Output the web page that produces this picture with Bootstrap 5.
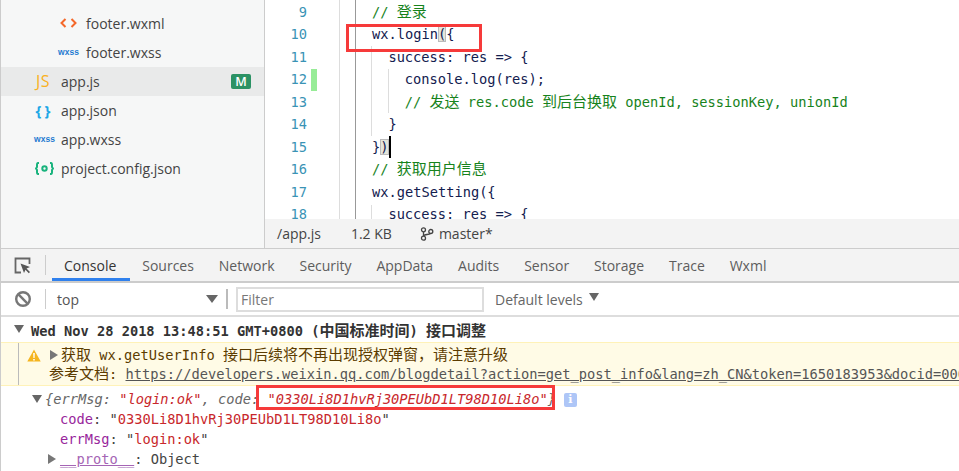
<!DOCTYPE html>
<html lang="zh-CN">
<head>
<meta charset="utf-8">
<title>WeChat DevTools</title>
<link href="https://cdn.jsdelivr.net/npm/bootstrap@5.3.0/dist/css/bootstrap.min.css" rel="stylesheet">
<style>
html,body{margin:0;height:471px;overflow:hidden;background:#fff}
.app-root{width:959px;height:471px;position:relative;overflow:hidden;border-left:1px solid #ccc;
 font-family:"Open Sans","Noto Sans CJK SC",sans-serif;font-size:14px;color:#3a3a3a}
.mono,.mono *{font-family:"DejaVu Sans Mono","Noto Sans CJK SC",monospace;font-size:13.7px}
.mono .cjk{font-family:"Noto Sans CJK SC",sans-serif;font-size:15px;line-height:1}
.top-pane{height:249px;border-bottom:1px solid #ccc}
.side-pane{width:264px;background:#f6f7f7;border-right:1px solid #ccc;flex:none;padding-top:8.5px}
.file-row{height:29px;line-height:29px;padding-right:13px;color:#444;font-size:14px}
.file-row.nested{padding-left:57px}
.file-row.flat{padding-left:33px}
.file-row.active{background:#e9eaea}
.ficon{width:21px;margin-right:7px;flex:none;display:flex;align-items:center;justify-content:center;height:29px}
.file-row.flat .ficon{margin-right:6px}
.wxss{font:bold 8.5px "Liberation Sans",sans-serif;color:#1f7ad1;letter-spacing:0}
.file-row.flat .jsicon{color:#f9b122;font:16px "Open Sans",sans-serif;letter-spacing:.5px;justify-content:flex-start;width:22px;margin-right:5px;padding-left:2px}
.jsonicon{color:#1ea7e6;font:bold 15px "Open Sans",sans-serif;letter-spacing:3px}
.m-badge{background:#2b9264;color:#fff;font-size:12.5px;font-weight:600;line-height:15px;height:15px;width:20px;text-align:center;border-radius:2px}
.main-pane{flex:1;min-width:0}
.code-view{height:219px;overflow:hidden}
.gutter{width:42px;flex:none;text-align:right;color:#3a93b5;padding-top:1px}
.code-line,.gutter-num{height:22.44px;line-height:22.44px;white-space:pre}
.change-col{width:32px;flex:none;padding:69px 0 0 4px}
.change-mark{width:6px;height:22px;background:#97ec97}
.code-col{flex:1;min-width:0;position:relative;border-left:1px solid #ddd;padding-left:15px}
.code-in{border-left:1px solid #999;padding-left:16px;padding-top:1px;height:240px;position:relative}
.c-id{color:#13204f}.c-cm{color:#17831c}
.guide{position:absolute;width:1px;background:#ddd}
.g1{left:15px;top:46px;height:90px}.g2{left:32px;top:69px;height:44px}.g3{left:15px;top:205px;height:30px}
.ind1{padding-left:16.4px}.ind2{padding-left:32.8px}
.br-hi{background:#e5e5da;box-shadow:inset 0 0 0 1px #bbb}
.cursor-mark{display:inline-block;width:2px;height:22px;background:#000;vertical-align:top}
.status-bar{height:29px;background:#f3f3f3;line-height:29px;padding-left:12px;font-size:14px;color:#444;gap:30px}
.branch-item{gap:5px;margin-left:-2px}
.dev-tabs{height:34px;background:#f3f3f3;border-bottom:2px solid #ccc}
.tool-ico{width:51px;flex:none;position:relative}
.vsep{width:1px;background:#ccc;height:20px;flex:none}
.dev-tab{padding:0 13px;color:#5d5d5d;height:32px;line-height:33px;font-size:14px;flex:none;margin-right:-1.100px}
.dev-tab.on{color:#333;box-shadow:inset 0 -3px 0 #2f80ed;padding:0 14px 0 12px}
.filter-bar{height:34px;border-bottom:2px solid #ddd}
.ctx-box{width:174px;padding-left:11px;color:#555;flex:none}
.tri-d{width:0;height:0;border-left:5px solid transparent;border-right:5px solid transparent;border-top:8px solid #666;flex:none}
.tri-wide{border-left-width:6px;border-right-width:6px;margin-right:2px}
.tri-r{width:0;height:0;border-top:5px solid transparent;border-bottom:5px solid transparent;border-left:8px solid #777;flex:none;display:inline-block}
.sep-thick{width:2px;background:#bbb;margin-left:6px}
.filter-input{width:248px;height:25px;border:2px solid #ddd;margin-left:8px;padding-left:3px;line-height:21px;color:#777;flex:none}
.levels{color:#666;margin-left:11px;gap:6px}
.group-head{height:25px;line-height:28px;padding-left:13px;font-weight:bold;color:#333;white-space:nowrap}
.warn-row{height:44px;background:#fffbe6;border-top:1px solid #fff2b8;border-bottom:1px solid #fff2b8;color:#5c3c00;line-height:19px;white-space:nowrap;overflow:hidden;position:relative;padding-left:49px;padding-top:3px}
.warn-bar{position:absolute;left:17px;top:0;bottom:0;width:1px;background:#bbb}
.warn-ico{position:absolute;left:26px;top:6px}
.warn-second{margin-left:-1px}
.warn-row a{color:#555}
.obj-area{position:relative;white-space:nowrap;padding-top:3px}
.obj-line{height:20px;line-height:20px}
.obj-line.l0{padding-left:31px}.obj-line.l1{padding-left:59px}
.key-i{color:#666;font-style:italic}.str-i{color:#c8272b;font-style:italic}
.key-p{color:#98269c}.str-r{color:#c8272b}.plain{color:#444}
.proto-key{color:#a565b5;text-decoration:underline}
.info-chip{display:inline-block;width:13px;height:14px;background:#aec6f7;color:#fff;border-radius:2px;font:bold 11px/14px "DejaVu Serif",serif;text-align:center;vertical-align:1px;margin-left:8px}
.red-box{position:absolute;border:3px solid #f63a3a;pointer-events:none}
.rb1{left:345px;top:24px;width:136px;height:28px}
.rb2{left:255px;top:385px;width:299px;height:25px}
</style>
</head>
<body>
<div class="app-root">
  <div class="top-pane d-flex">
    <div class="side-pane">
      <div class="file-row nested d-flex">
        <span class="ficon"><svg width="17" height="10" viewBox="0 0 17 10" fill="none" stroke="#f4682a" stroke-width="2"><path d="M5.500 1 1.500 5l4 4M11.500 1l4 4-4 4"/></svg></span>footer.wxml</div>
      <div class="file-row nested d-flex"><span class="ficon wxss">wxss</span>footer.wxss</div>
      <div class="file-row flat d-flex active"><span class="ficon jsicon">JS</span><span class="flex-grow-1">app.js</span><span class="m-badge align-self-center">M</span></div>
      <div class="file-row flat d-flex"><span class="ficon jsonicon">{}</span>app.json</div>
      <div class="file-row flat d-flex"><span class="ficon wxss">wxss</span>app.wxss</div>
      <div class="file-row flat d-flex"><span class="ficon"><svg width="19" height="13" viewBox="0 0 19 13" fill="none" stroke="#19b37d" stroke-width="2"><path d="M4 1H3C2 1 2 2 2 3v2L1 6.500l1 1.500v2c0 1 0 2 1 2h1M15 1h1c1 0 1 1 1 2v2l1 1.500-1 1.500v2c0 1 0 2-1 2h-1"/><circle cx="9.500" cy="6.500" r="2.200"/></svg></span>project.config.json</div>
    </div>
    <div class="main-pane d-flex flex-column">
      <div class="code-view d-flex mono">
        <div class="gutter">
          <div class="gutter-num">9</div><div class="gutter-num">10</div><div class="gutter-num">11</div><div class="gutter-num">12</div><div class="gutter-num">13</div><div class="gutter-num">14</div><div class="gutter-num">15</div><div class="gutter-num">16</div><div class="gutter-num">17</div><div class="gutter-num">18</div>
        </div>
        <div class="change-col"><div class="change-mark"></div></div>
        <div class="code-col">
          <div class="code-in">
            <span class="guide g1"></span><span class="guide g2"></span><span class="guide g3"></span>
            <div class="code-line c-cm">// <span class="cjk">登录</span></div>
            <div class="code-line c-id">wx.login<span class="br-hi">(</span>{</div>
            <div class="code-line c-id ind1">success: res =&gt; {</div>
            <div class="code-line c-id ind2">console.log(res);</div>
            <div class="code-line c-cm ind2">// <span class="cjk">发送</span> res.code <span class="cjk">到后台换取</span> openId, sessionKey, unionId</div>
            <div class="code-line c-id ind1">}</div>
            <div class="code-line c-id">}<span class="br-hi">)</span><span class="cursor-mark"></span></div>
            <div class="code-line c-cm">// <span class="cjk">获取用户信息</span></div>
            <div class="code-line c-id">wx.getSetting({</div>
            <div class="code-line c-id ind1">success: res =&gt; {</div>
          </div>
        </div>
      </div>
      <div class="status-bar d-flex">
        <span>/app.js</span><span>1.2 KB</span>
        <span class="d-flex align-items-center branch-item"><svg width="14" height="14" viewBox="0 0 14 14" fill="none" stroke="#444" stroke-width="1.300"><circle cx="3.500" cy="2.800" r="2"/><circle cx="3.500" cy="11.200" r="2"/><circle cx="10.800" cy="4.500" r="2"/><path d="M3.500 4.800v4.400M3.500 9C4 7 9 8 10.300 6.500"/></svg>master*</span>
      </div>
    </div>
  </div>
  <div class="dev-tabs d-flex align-items-center">
    <div class="tool-ico d-flex align-items-center justify-content-between" style="padding-left:13px;padding-right:6px">
      <svg width="17" height="17" viewBox="0 0 17 17" fill="none"><path d="M7 15.500H1.500v-14h14V7" stroke="#666" stroke-width="1.800"/><path d="M6.500 6.500 16 10l-3.500 1.500L16 15l-1.200 1.200-3.300-3.400L10 16z" fill="#555"/></svg>
      <span class="vsep"></span>
    </div>
    <div class="dev-tab on">Console</div><div class="dev-tab">Sources</div><div class="dev-tab">Network</div><div class="dev-tab">Security</div><div class="dev-tab">AppData</div><div class="dev-tab">Audits</div><div class="dev-tab">Sensor</div><div class="dev-tab">Storage</div><div class="dev-tab">Trace</div><div class="dev-tab">Wxml</div>
  </div>
  <div class="filter-bar d-flex align-items-center">
    <div class="tool-ico d-flex align-items-center justify-content-between" style="padding-left:13px;padding-right:0;width:45px">
      <svg width="18" height="18" viewBox="0 0 18 18" fill="none" stroke="#777" stroke-width="2.400"><circle cx="9" cy="9" r="6.800"/><path d="M4.200 4.200 13.800 13.800"/></svg>
      <span class="vsep"></span>
    </div>
    <div class="ctx-box d-flex align-items-center justify-content-between"><span>top</span><span class="tri-d tri-wide"></span></div>
    <span class="vsep sep-thick"></span>
    <div class="filter-input">Filter</div>
    <div class="levels d-flex align-items-center"><span>Default levels</span><span class="tri-d" style="margin-top:-4px"></span></div>
  </div>
  <div class="mono">
    <div class="group-head"><span class="tri-d" style="display:inline-block;vertical-align:3px;margin-right:7px"></span>Wed Nov 28 2018 13:48:51 GMT+0800 (<span class="cjk">中国标准时间</span>) <span class="cjk">接口调整</span></div>
    <div class="warn-row">
      <span class="warn-bar"></span>
      <svg class="warn-ico" width="14" height="13" viewBox="0 0 14 13"><path d="M7 .5 13.700 12.500H.3z" fill="#f5b51f"/><path d="M6.200 4h1.600l-.2 5H6.400zM6.200 10h1.600v1.500H6.200z" fill="#fff"/></svg>
      <div><span class="tri-r" style="margin-right:3px"></span><span class="cjk">获取</span> wx.getUserInfo <span class="cjk">接口后续将不再出现授权弹窗，请注意升级</span></div>
      <div class="warn-second"><span class="cjk">参考文档</span>: <a href="#">https://developers.weixin.qq.com/blogdetail?action=get_post_info&amp;lang=zh_CN&amp;token=1650183953&amp;docid=000a</a></div>
    </div>
    <div class="obj-area">
      <div class="obj-line l0"><span class="tri-d" style="display:inline-block;vertical-align:1px;margin-right:3px"></span><span class="key-i">{errMsg: </span><span class="str-i">"login:ok"</span><span class="key-i">, code: </span><span class="str-i">"0330Li8D1hvRj30PEUbD1LT98D10Li8o"</span><span class="key-i">}</span><span class="info-chip">i</span></div>
      <div class="obj-line l1"><span class="key-p">code</span><span class="plain">: "</span><span class="str-r">0330Li8D1hvRj30PEUbD1LT98D10Li8o</span><span class="plain">"</span></div>
      <div class="obj-line l1"><span class="key-p">errMsg</span><span class="plain">: "</span><span class="str-r">login:ok</span><span class="plain">"</span></div>
      <div class="obj-line" style="padding-left:47px"><span class="tri-r" style="margin-right:4px"></span><span class="proto-key">__proto__</span><span class="plain">: Object</span></div>
    </div>
  </div>
  <div class="red-box rb1"></div>
  <div class="red-box rb2"></div>
</div>
<script src="https://cdn.jsdelivr.net/npm/bootstrap@5.3.0/dist/js/bootstrap.bundle.min.js"></script>
</body>
</html>
